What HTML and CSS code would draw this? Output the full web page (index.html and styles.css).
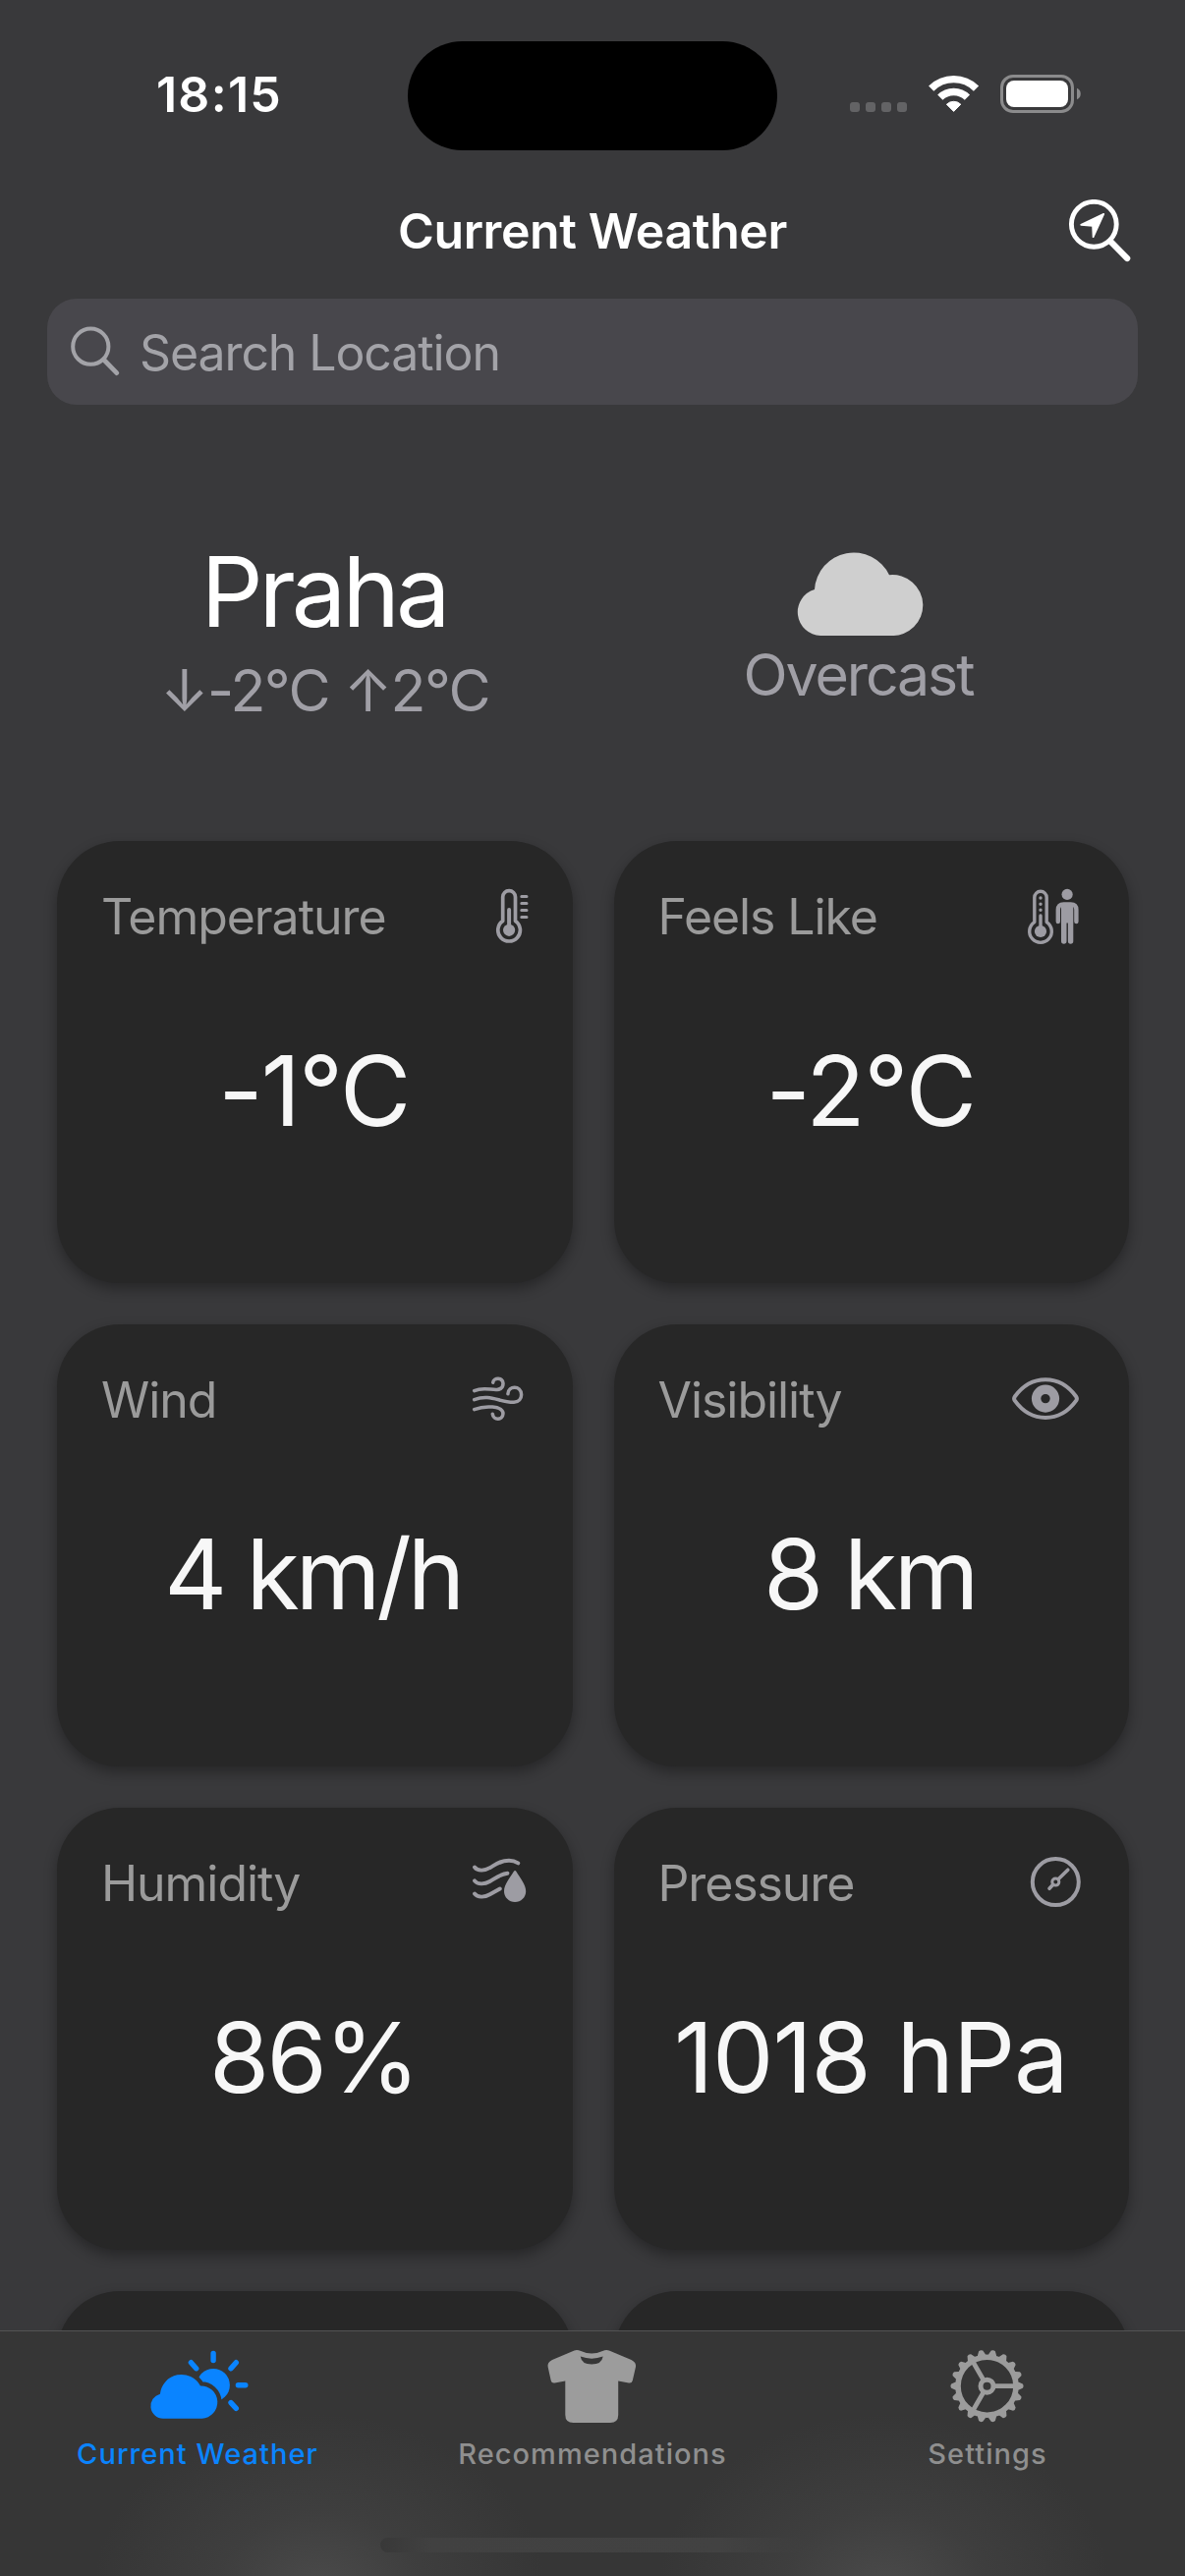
FILE: index.html
```html
<!DOCTYPE html>
<html lang="en">
<head>
<meta charset="utf-8">
<title>Current Weather</title>
<link rel="stylesheet" href="styles.css">
</head>
<body>
<div class="screen">
  <main class="content">
    <div class="status">
      <div class="status-time">18:15</div>
      <div class="island"></div>
      <svg class="status-icons" viewBox="865 72 236 50" width="236" height="50">
        <g fill="#636365">
          <rect x="865" y="104" width="10" height="10" rx="3"/>
          <rect x="881" y="104" width="10" height="10" rx="3"/>
          <rect x="897" y="104" width="10" height="10" rx="3"/>
          <rect x="913" y="104" width="10" height="10" rx="3"/>
        </g>
        <g fill="none" stroke="#fff" stroke-width="7.4">
          <path d="M947.7 90.1A32.4 32.4 0 0 1 993.5 90.1"/>
          <path d="M956.8 99.2A19.5 19.5 0 0 1 984.4 99.2"/>
        </g>
        <path d="M963.4 106.2A10.4 10.4 0 0 1 977.8 106.2L970.6 113.4Z" fill="#fff" stroke="#fff" stroke-width="1" stroke-linejoin="round"/>
        <rect x="1019.5" y="77.5" width="72" height="36" rx="11.5" fill="none" stroke="#8b8b8c" stroke-width="3"/>
        <rect x="1024" y="82" width="63" height="27" rx="8" fill="#fff"/>
        <path d="M1096 89.8A6.2 6.2 0 0 1 1096 101.2Z" fill="#8b8b8c"/>
      </svg>
    </div>

    <header class="nav">
      <h1 class="nav-title">Current Weather</h1>
      <svg class="nav-icon" viewBox="1084 203 68 64" width="68" height="64">
        <circle cx="1113.3" cy="228.3" r="22.9" fill="none" stroke="#fff" stroke-width="4.9"/>
        <path d="M1130 245.5L1147.2 263" stroke="#fff" stroke-width="6.2" stroke-linecap="round"/>
        <path d="M1123.2 217.9L1100.2 228.9L1112.1 229.8L1112.6 241.2Z" fill="#fff" stroke="#fff" stroke-width="1.8" stroke-linejoin="round"/>
      </svg>
    </header>

    <div class="search">
      <svg viewBox="68 328 56 60" width="56" height="60">
        <g fill="none" stroke="#a3a3a8" stroke-linecap="round">
          <circle cx="92.3" cy="352.7" r="18.1" stroke-width="4"/>
          <path d="M106 366.5L118.8 379.6" stroke-width="4.8"/>
        </g>
      </svg>
      <span class="search-hint">Search Location</span>
    </div>

    <section class="hero">
      <div class="hero-col">
        <div class="city">Praha</div>
        <div class="range">↓-2°C ↑2°C</div>
      </div>
      <div class="hero-col">
        <svg class="cloud" viewBox="811 562 130 85" width="130" height="85">
          <path d="M836 647A24 24 0 0 1 830 600A40 40 0 0 1 906 585.2A31 31 0 1 1 908 647Z" fill="#cfcfcf"/>
        </svg>
        <div class="condition">Overcast</div>
      </div>
    </section>

    <section class="cards">
      <article class="card">
        <div class="card-head">
          <span class="label l-temp">Temperature</span>
          <svg class="icon" viewBox="457 901 80 64">
            <path class="line" stroke-width="3.7" d="M510.7 937.4V913A6.4 6.4 0 0 1 523.5 913V937.4A11.3 11.3 0 1 1 510.7 937.4Z"/>
            <path class="line" stroke-width="4" d="M517.1 926V945"/>
            <circle class="solid" cx="517.1" cy="946.8" r="6.1"/>
            <path class="line" stroke-width="3" d="M529.8 912.4H535M529.8 919.4H535M529.8 926.4H535M529.8 933.4H535"/>
          </svg>
        </div>
        <div class="value v-temp">-1°C</div>
      </article>

      <article class="card">
        <div class="card-head">
          <span class="label l-feels">Feels Like</span>
          <svg class="icon" viewBox="1024 901 80 64">
            <path class="line" stroke-width="3.4" d="M1052.8 938.6V913.5A6.2 6.2 0 0 1 1065.2 913.5V938.6A11.3 11.3 0 1 1 1052.8 938.6Z"/>
            <path class="line" stroke-width="3.4" d="M1059 932V946M1059 914V914.1M1059 920.2V920.3M1059 926.2V926.3"/>
            <circle class="solid" cx="1059" cy="948" r="6.1"/>
            <circle class="solid" cx="1086.1" cy="910.4" r="5.6"/>
            <path class="line" stroke-width="4.4" d="M1076.8 938V926Q1077 920.4 1082.5 920.4H1089.7Q1095.4 920.4 1095.4 926V938"/>
            <path class="solid" d="M1080 920H1092.3V958A2.7 2.7 0 0 1 1086.9 958V939.5H1085.5V958A2.7 2.7 0 0 1 1080 958Z"/>
          </svg>
        </div>
        <div class="value v-feels">-2°C</div>
      </article>

      <article class="card">
        <div class="card-head">
          <span class="label l-wind">Wind</span>
          <svg class="icon" viewBox="457 1393 80 64">
            <g class="line" stroke-width="3.5">
              <path d="M481.7 1415.6C491 1411.5 498 1415 505 1414.5C509.5 1414 511.2 1411 511 1407.8C510.6 1401.8 501.5 1402 500.7 1407.2"/>
              <path d="M481.7 1424.6C498 1418.5 507 1427.5 522 1427.3C527 1427 529.7 1423.5 529.6 1419.5C529.2 1409.8 516.3 1410.2 515.9 1418.8"/>
              <path d="M481.7 1434.7C492 1430.5 511 1430.5 511 1439C510.5 1446.3 501 1445.8 500.3 1439.2"/>
            </g>
          </svg>
        </div>
        <div class="value v-wind">4 km/h</div>
      </article>

      <article class="card">
        <div class="card-head">
          <span class="label l-vis">Visibility</span>
          <svg class="icon" viewBox="1024 1393 80 64">
            <path class="line" stroke-width="4" d="M1032.8 1421.5C1040 1411.5 1051 1404.2 1064 1404.2S1088 1411.5 1095.2 1421.5Q1096.6 1423.6 1095.2 1425.7C1088 1435.7 1077 1443 1064 1443S1040 1435.7 1032.8 1425.7Q1031.4 1423.6 1032.8 1421.5Z"/>
            <circle cx="1064" cy="1423.6" r="9.4" fill="none" stroke="#9d9ca3" stroke-width="9.4"/>
          </svg>
        </div>
        <div class="value v-vis">8 km</div>
      </article>

      <article class="card">
        <div class="card-head">
          <span class="label l-hum">Humidity</span>
          <svg class="icon" viewBox="457 1885 80 64">
            <g class="line" stroke-width="3.9">
              <path d="M482 1900.5C485 1904.5 492 1904.5 497.5 1901.2C504 1897.5 508 1893.8 517 1893.8Q522 1893.8 526.3 1896.4"/>
              <path d="M482 1914.3C485 1918.3 492 1918.2 497.5 1915C503 1911.8 508 1907.5 515.5 1906.8"/>
              <path d="M482 1927.5C485 1931.5 492 1931.5 497.5 1928.3L507.8 1922.5"/>
            </g>
            <path class="solid" stroke="#272727" stroke-width="4.4" paint-order="stroke" d="M521.6 1905.2Q523.1 1902.8 524.6 1905.2C528 1911 534.2 1918 534.2 1924.9A11.1 11.1 0 0 1 512 1924.9C512 1918 518.2 1911 521.6 1905.2Z"/>
          </svg>
        </div>
        <div class="value v-hum">86%</div>
      </article>

      <article class="card">
        <div class="card-head">
          <span class="label l-press">Pressure</span>
          <svg class="icon" viewBox="1024 1885 80 64">
            <g class="line">
              <circle cx="1074.3" cy="1915.6" r="23.5" stroke-width="4"/>
              <path stroke-width="3.6" d="M1068 1922.3L1071.5 1918.5M1077.3 1912.5L1086.8 1903.2"/>
              <circle cx="1074.3" cy="1915.6" r="3.5" stroke-width="3"/>
            </g>
          </svg>
        </div>
        <div class="value v-press">1018 hPa</div>
      </article>

      <article class="card"></article>
      <article class="card"></article>
    </section>
  </main>

  <nav class="tabs">
    <div class="tab tab-active">
      <svg viewBox="145 2388 112 82" width="112" height="82">
        <defs>
          <path id="tab-cloud" d="M166 2461.7A12.7 12.7 0 0 1 162.9 2436.7A21.9 21.9 0 0 1 204 2428.5A16.6 16.6 0 0 1 205.5 2461.7Z"/>
          <mask id="sun-mask" maskUnits="userSpaceOnUse" x="145" y="2388" width="112" height="82">
            <rect x="145" y="2388" width="112" height="82" fill="#fff"/>
            <use href="#tab-cloud" fill="#000" stroke="#000" stroke-width="8.6"/>
          </mask>
        </defs>
        <use href="#tab-cloud" fill="currentColor"/>
        <circle cx="217.1" cy="2427.7" r="16.8" fill="currentColor" mask="url(#sun-mask)"/>
        <path fill="none" stroke="currentColor" stroke-width="5.4" stroke-linecap="round" d="M217.1 2395.4V2402.6M194.4 2404.7L199.7 2410.7M240.3 2404.7L235 2410.7M242.4 2427.7H249.8M235 2445.6L240.3 2451.3"/>
      </svg>
      <span class="tab-label">Current Weather</span>
    </div>
    <div class="tab">
      <svg class="shape" viewBox="547 2388 112 82" width="112" height="82">
        <path fill-rule="evenodd" d="M584.5 2392.5Q586.8 2391.4 589 2392.3Q602.2 2398.5 615.4 2392.3Q617.5 2391.4 619.9 2392.5L642.5 2402Q647.7 2404.5 647 2409L643.8 2423Q643 2426 640 2425.5L629.2 2423.5V2458Q629.2 2466 621 2466H583.5Q575.3 2466 575.3 2458V2423.5L564.5 2425.5Q561.4 2426 560.7 2423L557.6 2409Q556.8 2404.5 562 2402ZM590.7 2398.5Q592 2406.6 602.2 2406.6T613.7 2398.5Q602.2 2402.8 590.7 2398.5Z"/>
      </svg>
      <span class="tab-label">Recommendations</span>
    </div>
    <div class="tab">
      <svg class="shape" viewBox="-55.5 -40.7 112 82" width="112" height="82">
        <defs>
          <path id="teeth" d="M29 -4.8L32.5 -3.9L36.3 -2.1Q37.8 0 36.3 2.1L32.5 3.9L29 4.8ZM-29 -4.8L-32.5 -3.9L-36.3 -2.1Q-37.8 0 -36.3 2.1L-32.5 3.9L-29 4.8Z"/>
        </defs>
        <use href="#teeth"/>
        <use href="#teeth" transform="rotate(20)"/>
        <use href="#teeth" transform="rotate(40)"/>
        <use href="#teeth" transform="rotate(60)"/>
        <use href="#teeth" transform="rotate(80)"/>
        <use href="#teeth" transform="rotate(100)"/>
        <use href="#teeth" transform="rotate(120)"/>
        <use href="#teeth" transform="rotate(140)"/>
        <use href="#teeth" transform="rotate(160)"/>
        <g fill="none" stroke="#9c9c9c">
          <circle r="29.5" stroke-width="5.6"/>
          <circle r="6.5" stroke-width="5"/>
          <path stroke-width="4.7" d="M7.5 0H28M-3.75 -6.5L-14 -24.25M-3.75 6.5L-14 24.25"/>
        </g>
      </svg>
      <span class="tab-label">Settings</span>
    </div>
    <div class="home-bar"></div>
  </nav>
</div>
</body>
</html>
```
FILE: styles.css
```css
* {
  box-sizing: border-box;
}

body {
  margin: 0;
  background: #39393b;
  color: #fff;
  font-family: Inter, "Liberation Sans", sans-serif;
}

.screen {
  display: flex;
  flex-direction: column;
  width: 1206px;
  height: 2622px;
  overflow: hidden;
}

.content {
  flex: 1;
  min-height: 0;
  overflow: hidden;
}

/* Status bar */
.status {
  display: flex;
  align-items: center;
  height: 162px;
  padding-top: 32px;
}

.status-time {
  width: 415px;
  padding: 0 0 2px 31px;
  text-align: center;
  font-size: 50px;
  font-weight: 600;
  line-height: 60px;
  letter-spacing: 1.3px;
}

.island {
  width: 376px;
  height: 111px;
  border-radius: 56px;
  background: #000;
}

.status-icons {
  margin-left: 74px;
}

/* Title and search */
.nav {
  display: grid;
  grid-template-columns: 1fr auto 1fr;
  align-items: center;
  height: 142px;
  padding: 4px 54px 0;
}

.nav-title {
  grid-column: 2;
  margin: 0;
  font-size: 50px;
  font-weight: 600;
  line-height: 60px;
  letter-spacing: -0.4px;
}

.nav-icon {
  justify-self: end;
}

.search {
  display: flex;
  align-items: center;
  gap: 18px;
  height: 108px;
  margin: 0 48px;
  padding-left: 20px;
  border-radius: 30px;
  background: #48474c;
  color: #a3a3a8;
  font-size: 50px;
  letter-spacing: -1.1px;
}

.search-hint {
  padding-top: 2px;
}

/* Location summary */
.hero {
  display: grid;
  grid-template-columns: 1fr 1fr;
  height: 444px;
  padding: 130px 60px 0;
  text-align: center;
}

.hero-col {
  display: flex;
  flex-direction: column;
  align-items: center;
  white-space: nowrap;
}

/* The matching indent cancels the tracking after the last letter, so centred text stays centred. */
.city,
.range,
.condition,
.value {
  letter-spacing: var(--tracking);
  text-indent: var(--tracking);
}

.city {
  --tracking: -4px;
  font-size: 99px;
  line-height: 120px;
}

.range,
.condition {
  color: #a09fa6;
  font-size: 59px;
  line-height: 72px;
}

.range {
  --tracking: -1.6px;
  margin-top: 5px;
}

.cloud {
  margin-top: 20px;
}

.condition {
  --tracking: -2.1px;
  margin-top: 4px;
}

/* Metric cards */
.cards {
  display: grid;
  grid-template-columns: 1fr 1fr;
  grid-auto-rows: 450px;
  gap: 42px;
  padding: 0 57px 0 58px;
}

.card {
  padding: 45px;
  border-radius: 64px;
  background: #272727;
  box-shadow: 0 6px 14px rgba(0, 0, 0, 0.33);
}

.card-head {
  display: flex;
  justify-content: space-between;
  align-items: center;
  height: 64px;
}

.label {
  color: #9b9b9b;
  font-size: 50px;
  line-height: 64px;
  letter-spacing: -1.05px;
  white-space: nowrap;
}

.l-feels,
.l-press {
  letter-spacing: -1.1px;
}

.icon {
  width: 80px;
  height: 64px;
}

.line {
  fill: none;
  stroke: #9d9ca3;
  stroke-linecap: round;
  stroke-linejoin: round;
}

.solid {
  fill: #9d9ca3;
}

.value {
  margin: 85px -20px 0;
  color: #f7f7f7;
  font-size: 99px;
  line-height: 120px;
  text-align: center;
  white-space: nowrap;
}

.v-temp { --tracking: -2px; }
.v-feels { --tracking: -1.4px; }
.v-wind { --tracking: -4.2px; }
.v-vis { --tracking: -3.6px; }
.v-hum { --tracking: -2.6px; }
.v-press { --tracking: -1.1px; }

/* Tab bar */
.tabs {
  display: grid;
  grid-template-columns: repeat(3, 1fr);
  grid-template-rows: 210px 15px;
  height: 250px;
  border-top: 1px solid #535354;
  background:
    radial-gradient(ellipse 230px 180px at 325px 265px, #4b4b4b, rgba(68, 68, 68, 0.6) 45%, rgba(60, 60, 60, 0)),
    radial-gradient(ellipse 230px 180px at 900px 265px, #4b4b4b, rgba(68, 68, 68, 0.6) 45%, rgba(60, 60, 60, 0)),
    #363636;
}

.tab {
  display: flex;
  flex-direction: column;
  align-items: center;
  padding-top: 15px;
  color: #8f8f8f;
}

.tab-active {
  color: #0a84ff;
}

.shape {
  fill: #9c9c9c;
}

.tab-label {
  margin-top: 8px;
  font-size: 29px;
  font-weight: 500;
  line-height: 40px;
  letter-spacing: 1.05px;
  white-space: nowrap;
}

.home-bar {
  grid-column: 1 / -1;
  width: 432px;
  margin-left: 387px;
  border-radius: 8px;
  background: linear-gradient(90deg, #383838, #414141 12%, #424242 80%, rgba(66, 66, 66, 0));
}
```
